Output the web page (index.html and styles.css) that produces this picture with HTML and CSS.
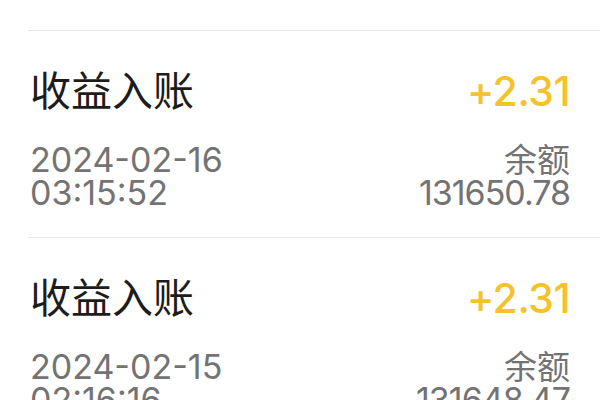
FILE: index.html
```html
<!DOCTYPE html>
<html lang="zh-CN">
<head>
<meta charset="utf-8">
<title>收益明细</title>
<link rel="stylesheet" href="styles.css">
</head>
<body>
<main class="list">
  <div class="item">
    <div class="title">收益入账</div>
    <div class="amount">+2.31</div>
    <div class="date">2024-02-17</div>
    <div class="label">余额</div>
    <div class="time">02:11:17</div>
    <div class="balance">131653.09</div>
  </div>
  <div class="item">
    <div class="title">收益入账</div>
    <div class="amount">+2.31</div>
    <div class="date">2024-02-16</div>
    <div class="label">余额</div>
    <div class="time">03:15:52</div>
    <div class="balance">131650.78</div>
  </div>
  <div class="item">
    <div class="title">收益入账</div>
    <div class="amount">+2.31</div>
    <div class="date">2024-02-15</div>
    <div class="label">余额</div>
    <div class="time">02:16:16</div>
    <div class="balance">131648.47</div>
  </div>
</main>
</body>
</html>
```
FILE: styles.css
```css
html, body {
  margin: 0;
  padding: 0;
  background: #ffffff;
  overflow: hidden;
}

.list {
  margin-top: -176px;
  margin-left: 28px;
}

.item {
  display: grid;
  grid-template-columns: 1fr auto;
  align-items: baseline;
  padding: 37px 30px 30px 2px;
  border-bottom: 1px solid #e8e8e8;
  height: 139px;
}

.title {
  font-family: "Noto Sans CJK SC", sans-serif;
  font-size: 41px;
  line-height: 41px;
  color: #1c1c1c;
}

.amount {
  font-family: Inter, "Noto Sans", sans-serif;
  font-size: 41px;
  line-height: 41px;
  font-weight: 500;
  color: #f6c22c;
  text-align: right;
  letter-spacing: -0.5px;
}

.date,
.time,
.balance {
  font-family: Inter, "Noto Sans", sans-serif;
  font-size: 34px;
  line-height: 33px;
  color: #737373;
}

.date,
.label {
  margin-top: 30px;
}

.label {
  font-family: "Noto Sans CJK SC", sans-serif;
  font-size: 33px;
  line-height: 33px;
  color: #737373;
  text-align: right;
}

.balance {
  text-align: right;
  letter-spacing: -1px;
}
```
